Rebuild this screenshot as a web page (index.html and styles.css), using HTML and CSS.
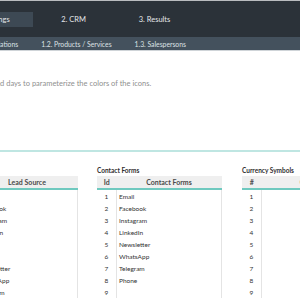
FILE: index.html
```html
<!DOCTYPE html>
<html lang="en">
<head>
    <meta charset="UTF-8">
    <meta name="viewport" content="width=device-width, initial-scale=1.0">
    <title>Settings - CRM</title>
    <link rel="stylesheet" href="styles.css">
</head>
<body>
    <div class="sheet">
        <div class="topbar">
            <div class="tab active">1. Settings</div>
            <div class="tab">2. CRM</div>
            <div class="tab">3. Results</div>
        </div>
        <div class="subnav">
            <span>1.1. Relations</span>
            <span>1.2. Products / Services</span>
            <span>1.3. Salespersons</span>
        </div>

        <p class="hint">Number of elapsed days to parameterize the colors of the icons.</p>

        <div class="divider"></div>

        <div class="tables">
            <div class="list lead">
                <div class="list-title">Lead Sources</div>
                <table>
                    <tr><th class="id">#</th><th>Lead Source</th></tr>
                    <tr><td class="id">1</td><td>Ads</td></tr>
                    <tr><td class="id">2</td><td>Facebook</td></tr>
                    <tr><td class="id">3</td><td>Instagram</td></tr>
                    <tr><td class="id">4</td><td>LinkedIn</td></tr>
                    <tr><td class="id">5</td><td>Email</td></tr>
                    <tr><td class="id">6</td><td>Phone</td></tr>
                    <tr><td class="id">7</td><td>Newsletter</td></tr>
                    <tr><td class="id">8</td><td>WhatsApp</td></tr>
                    <tr><td class="id">9</td><td>Telegram</td></tr>
                </table>
            </div>

            <div class="list contact">
                <div class="list-title">Contact Forms</div>
                <table>
                    <tr><th class="id">Id</th><th>Contact Forms</th></tr>
                    <tr><td class="id">1</td><td>Email</td></tr>
                    <tr><td class="id">2</td><td>Facebook</td></tr>
                    <tr><td class="id">3</td><td>Instagram</td></tr>
                    <tr><td class="id">4</td><td>LinkedIn</td></tr>
                    <tr><td class="id">5</td><td>Newsletter</td></tr>
                    <tr><td class="id">6</td><td>WhatsApp</td></tr>
                    <tr><td class="id">7</td><td>Telegram</td></tr>
                    <tr><td class="id">8</td><td>Phone</td></tr>
                    <tr><td class="id">9</td><td></td></tr>
                </table>
            </div>

            <div class="list currency">
                <div class="list-title">Currency Symbols</div>
                <table>
                    <tr><th class="id">#</th><th>Currency</th></tr>
                    <tr><td class="id">1</td><td></td></tr>
                    <tr><td class="id">2</td><td></td></tr>
                    <tr><td class="id">3</td><td></td></tr>
                    <tr><td class="id">4</td><td></td></tr>
                    <tr><td class="id">5</td><td></td></tr>
                    <tr><td class="id">6</td><td></td></tr>
                    <tr><td class="id">7</td><td></td></tr>
                    <tr><td class="id">8</td><td></td></tr>
                    <tr><td class="id">9</td><td></td></tr>
                </table>
            </div>
        </div>
    </div>
</body>
</html>
```

FILE: styles.css
```css
body {
    margin: 0;
    font-family: Lato, "Open Sans", sans-serif;
    background: white;
    overflow: hidden;
}
.sheet {
    margin-left: -55px;
    width: 420px;
}
.topbar {
    background: #2b3239;
    border-top: 1px solid #b9bcbf;
    height: 36px;
    padding-left: 7px;
    display: flex;
    align-items: flex-start;
}
.tab {
    width: 81px;
    height: 15px;
    margin-top: 11px;
    color: #e4e7ea;
    font-size: 7.5px;
    display: flex;
    align-items: center;
    justify-content: center;
}
.tab.active {
    background: #3d4954;
}
.subnav {
    background: #44515d;
    border-bottom: 1px solid #cfd4d8;
    height: 13px;
    padding-left: 33px;
    display: flex;
    align-items: center;
    gap: 23px;
    color: #dce1e5;
    font-size: 6.8px;
}
.hint {
    margin: 28px 0 0 -3px;
    color: #8f8f8f;
    font-size: 7.5px;
    line-height: 9px;
}
.divider {
    height: 2px;
    background: #bfe6e2;
    margin-top: 62px;
}
.tables {
    display: flex;
    align-items: flex-start;
    padding-left: 12px;
    margin-top: 14px;
}
.list-title {
    font-size: 6.5px;
    font-weight: bold;
    color: #2f2f2f;
    height: 9px;
    line-height: 9px;
    margin-bottom: 1px;
}
table {
    border-collapse: collapse;
    font-size: 6.5px;
    color: #333;
}
th {
    background: #efefef;
    border-bottom: 2px solid #6fc9bf;
    height: 12px;
    padding: 0;
    font-weight: bold;
    font-size: 7px;
    color: #4a4a4a;
}
td {
    height: 12px;
    padding: 0 0 0 2px;
    border-right: 1px solid #e4e4e4;
}
td.id, th.id {
    width: 19px;
    padding: 0;
    text-align: center;
}
.lead table {
    width: 121px;
}
.contact {
    margin-left: 19px;
}
.contact table {
    width: 125px;
}
.currency {
    margin-left: 20px;
}
.currency table {
    width: 125px;
}
```
